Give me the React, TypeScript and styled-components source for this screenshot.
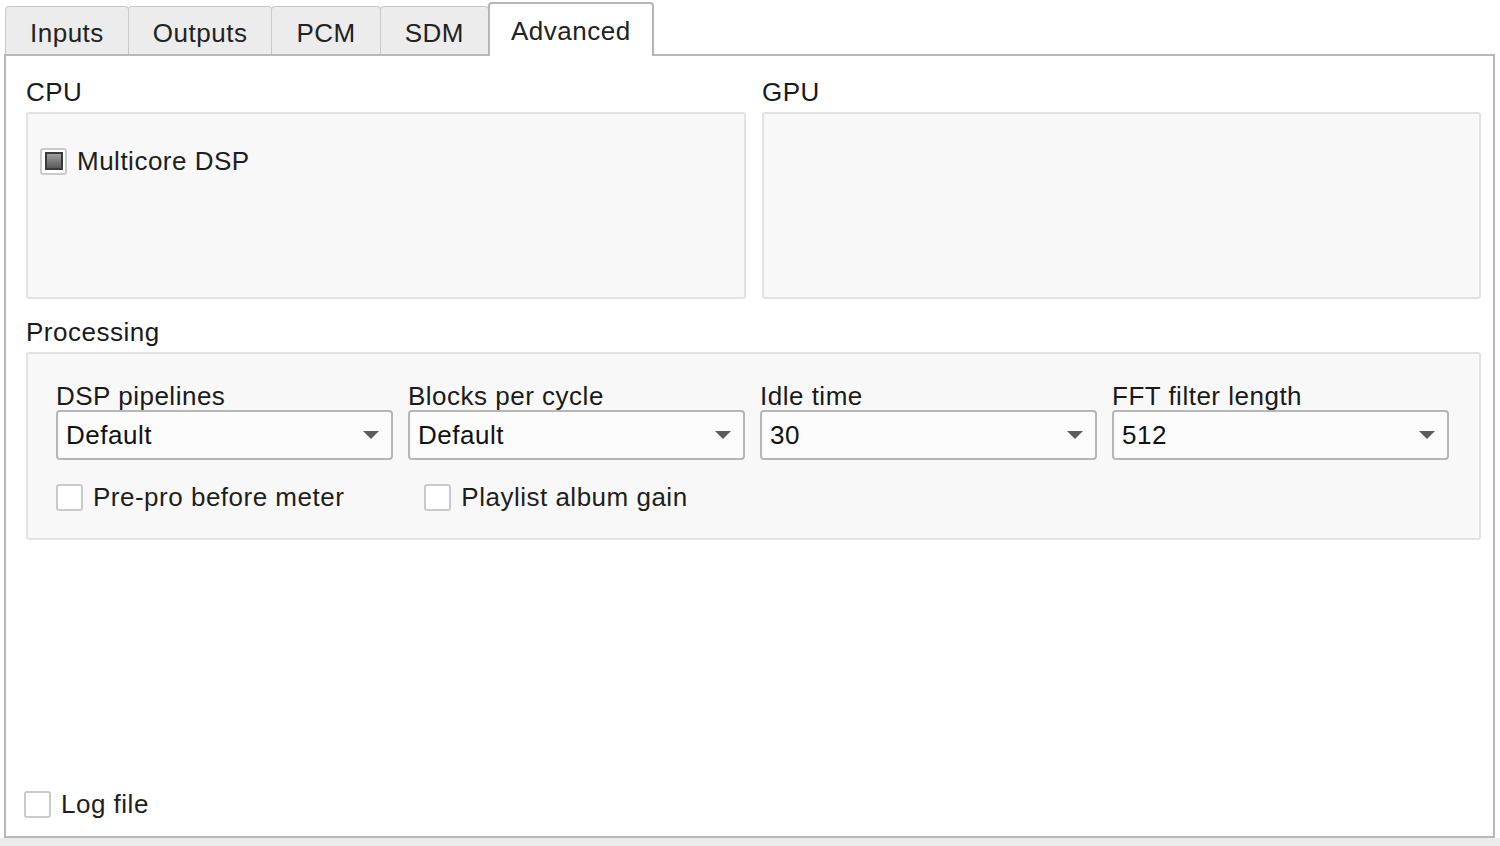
import React, { useState } from 'react';
import styled, { createGlobalStyle } from 'styled-components';

const tabs = ['Inputs', 'Outputs', 'PCM', 'SDM', 'Advanced'];

const combos = [
  { label: 'DSP pipelines', value: 'Default' },
  { label: 'Blocks per cycle', value: 'Default' },
  { label: 'Idle time', value: '30' },
  { label: 'FFT filter length', value: '512' },
];

const GlobalStyle = createGlobalStyle`
  html, body {
    margin: 0;
    padding: 0;
    background: #ffffff;
  }
  body {
    font-family: 'Liberation Sans', Arial, sans-serif;
    font-size: 26px;
    letter-spacing: 0.5px;
    color: #1e1e1e;
  }
`;

const Window = styled.div`
  width: 1500px;
  height: 846px;
  display: flex;
  flex-direction: column;
  overflow: hidden;
`;

const TabBar = styled.div`
  height: 54px;
  display: flex;
  align-items: flex-end;
  padding-left: 5px;
  position: relative;
  z-index: 1;
`;

const Tab = styled.div<{ $active: boolean }>`
  box-sizing: border-box;
  height: ${(p) => (p.$active ? '54px' : '48px')};
  margin-bottom: ${(p) => (p.$active ? '-2px' : '0')};
  margin-right: -1px;
  padding: ${(p) => (p.$active ? '9px 21px 0' : '8px 24px 0')};
  line-height: 36px;
  background: ${(p) => (p.$active ? '#ffffff' : '#ececec')};
  border: ${(p) => (p.$active ? '2px solid #b5b5b5' : '1px solid #c8c8c8')};
  border-bottom: none;
  border-radius: 4px 4px 0 0;
  color: #222;
  cursor: default;
  position: relative;
  z-index: ${(p) => (p.$active ? 2 : 1)};
`;

const Panel = styled.div`
  box-sizing: border-box;
  width: 1491px;
  height: 784px;
  margin-left: 4px;
  border: 2px solid #b8b8b8;
  background: #ffffff;
  padding: 21px 12px 17px 20px;
  display: flex;
  flex-direction: column;
`;

const TopRow = styled.div`
  display: grid;
  grid-template-columns: 720px 719px;
  gap: 16px;
`;

const Column = styled.div`
  display: flex;
  flex-direction: column;
`;

const GroupLabel = styled.div`
  height: 30px;
  line-height: 30px;
  margin-bottom: 5px;
  color: #1a1a1a;
`;

const GroupBox = styled.div<{ $height: number }>`
  box-sizing: border-box;
  height: ${(p) => p.$height}px;
  background: #f8f8f8;
  border: 2px solid #e2e2e2;
  border-radius: 3px;
`;

const SectionGap = styled.div`
  height: 18px;
`;

const CpuInner = styled.div`
  padding: 32px 0 0 12px;
`;

const ProcessingInner = styled.div`
  padding: 28px 30px 0 28px;
`;

const ComboGrid = styled.div`
  display: grid;
  grid-template-columns: repeat(4, 1fr);
  gap: 15px;
`;

const Field = styled.div`
  display: flex;
  flex-direction: column;
`;

const FieldLabel = styled.div`
  height: 28px;
  line-height: 28px;
  color: #1a1a1a;
`;

const Combo = styled.div`
  box-sizing: border-box;
  height: 50px;
  border: 2px solid #b6b6b6;
  border-radius: 4px;
  background: #fcfcfc;
  display: flex;
  align-items: center;
  justify-content: space-between;
  padding: 0 12px 0 8px;
`;

const ComboValue = styled.span`
  color: #111;
`;

const OptionRow = styled.div`
  display: flex;
  gap: 80px;
  margin-top: 22px;
`;

const CheckRow = styled.div`
  height: 30px;
  display: flex;
  align-items: center;
  gap: 10px;
`;

const CheckBox = styled.div`
  box-sizing: border-box;
  width: 27px;
  height: 27px;
  border: 2px solid #cacaca;
  border-radius: 3px;
  background: #ffffff;
  display: flex;
  align-items: center;
  justify-content: center;
`;

// partially checked state, drawn as a shaded square
const MixedMark = styled.div`
  box-sizing: border-box;
  width: 18px;
  height: 18px;
  border: 2px solid #3a3a3a;
  background: linear-gradient(#a0a0a0, #5a5a5a);
`;

const CheckText = styled.span`
  color: #1e1e1e;
  line-height: 30px;
`;

const FooterRow = styled.div`
  margin-top: auto;
  margin-left: -2px;
`;

const BottomStrip = styled.div`
  flex: 1;
  background: #ececec;
`;

const Arrow = () => (
  <svg width="16" height="8" viewBox="0 0 16 8">
    <path d="M0 0 L16 0 L8 8 Z" fill="#5c5c5c" />
  </svg>
);

const Check = ({ mixed }: { mixed?: boolean }) => (
  <CheckBox>{mixed && <MixedMark />}</CheckBox>
);

const CheckOption = ({ label, mixed }: { label: string; mixed?: boolean }) => (
  <CheckRow>
    <Check mixed={mixed} />
    <CheckText>{label}</CheckText>
  </CheckRow>
);

const App = () => {
  const [active, setActive] = useState('Advanced');

  return (
    <Window>
      <GlobalStyle />
      <TabBar>
        {tabs.map((t) => (
          <Tab key={t} $active={t === active} onClick={() => setActive(t)}>
            {t}
          </Tab>
        ))}
      </TabBar>
      <Panel>
        <TopRow>
          <Column>
            <GroupLabel>CPU</GroupLabel>
            <GroupBox $height={187}>
              <CpuInner>
                <CheckOption label="Multicore DSP" mixed />
              </CpuInner>
            </GroupBox>
          </Column>
          <Column>
            <GroupLabel>GPU</GroupLabel>
            <GroupBox $height={187} />
          </Column>
        </TopRow>

        <SectionGap />
        <GroupLabel>Processing</GroupLabel>
        <GroupBox $height={188}>
          <ProcessingInner>
            <ComboGrid>
              {combos.map((c) => (
                <Field key={c.label}>
                  <FieldLabel>{c.label}</FieldLabel>
                  <Combo>
                    <ComboValue>{c.value}</ComboValue>
                    <Arrow />
                  </Combo>
                </Field>
              ))}
            </ComboGrid>
            <OptionRow>
              <CheckOption label="Pre-pro before meter" />
              <CheckOption label="Playlist album gain" />
            </OptionRow>
          </ProcessingInner>
        </GroupBox>

        <FooterRow>
          <CheckOption label="Log file" />
        </FooterRow>
      </Panel>
      <BottomStrip />
    </Window>
  );
};

export default App;
